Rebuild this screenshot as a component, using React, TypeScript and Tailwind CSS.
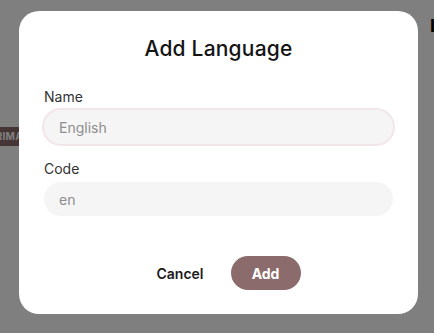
import { useState } from 'react';

export default function App() {
  const [name, setName] = useState('');
  const [code, setCode] = useState('');

  return (
    <div className="relative h-[333px] w-[434px] overflow-hidden bg-white font-['Inter',sans-serif]">
      {/* page behind the dialog */}
      <div className="flex h-full">
        <div className="w-[430px] shrink-0 pt-[122px]">
          <span className="ml-[-19px] inline-block rounded bg-[#8b6b6b] px-2 py-[2px] text-[10px] font-bold tracking-wide text-white">
            PRIMARY
          </span>
        </div>
        <h2 className="pt-[12px] text-[18px] font-bold whitespace-nowrap text-black">Languages</h2>
      </div>

      <div className="absolute inset-0 bg-black/50 pt-[11px] pl-[19px]">
        <div className="w-[399px] rounded-[20px] bg-white px-[25px] pt-6 pb-6">
          <h1 className="text-center text-[21px] leading-7 font-medium tracking-[0.2px] text-[#141414]">Add Language</h1>

          <div className="mt-6">
            <label htmlFor="lang-name" className="mb-[3px] block text-[14px] leading-5 text-[#333]">
              Name
            </label>
            <input
              id="lang-name"
              value={name}
              onChange={(event) => setName(event.target.value)}
              placeholder="English"
              className="h-[34px] w-full rounded-full bg-[#f5f5f5] px-[15px] text-[14px] text-[#333] outline-none ring-2 ring-[#f3e6e8] placeholder:text-[#8e8e8e]"
            />
          </div>

          <div className="mt-[15px]">
            <label htmlFor="lang-code" className="mb-[3px] block text-[14px] leading-5 text-[#333]">
              Code
            </label>
            <input
              id="lang-code"
              value={code}
              onChange={(event) => setCode(event.target.value)}
              placeholder="en"
              className="h-[34px] w-full rounded-full bg-[#f5f5f5] px-[15px] text-[14px] text-[#333] outline-none placeholder:text-[#8e8e8e]"
            />
          </div>

          <div className="mt-10 flex items-center justify-center gap-[7px]">
            <button type="button" className="h-[34px] rounded-full px-5 text-[14px] font-semibold text-[#1a1a1a]">
              Cancel
            </button>
            <button type="button" className="h-[34px] w-[70px] rounded-full bg-[#8b6b6b] text-[14px] font-bold text-white">
              Add
            </button>
          </div>
        </div>
      </div>
    </div>
  );
}
